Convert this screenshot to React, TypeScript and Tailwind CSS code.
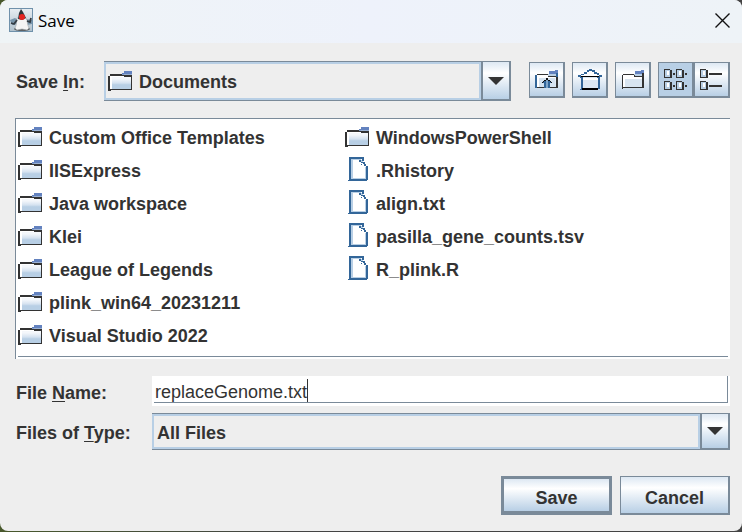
import type { ReactNode } from "react";

const folders = [
  "Custom Office Templates",
  "IISExpress",
  "Java workspace",
  "Klei",
  "League of Legends",
  "plink_win64_20231211",
  "Visual Studio 2022",
];

const entries = [
  ...folders.map((name) => ({ name, folder: true })),
  { name: "WindowsPowerShell", folder: true },
  { name: ".Rhistory", folder: false },
  { name: "align.txt", folder: false },
  { name: "pasilla_gene_counts.tsv", folder: false },
  { name: "R_plink.R", folder: false },
];

function FolderIcon() {
  return (
    <svg width="24" height="20" viewBox="0 0 24 20" shapeRendering="crispEdges" aria-hidden="true">
      <defs>
        <linearGradient id="folder" x1="0" y1="0" x2="0" y2="1">
          <stop offset="0.15" stopColor="#f4f7fb" />
          <stop offset="0.5" stopColor="#d5e2f0" />
          <stop offset="0.65" stopColor="#b8cfe5" />
        </linearGradient>
      </defs>
      <path d="M2 5h21v13H2z" fill="#fff" />
      <path d="M4 6h19v12H4z" fill="url(#folder)" />
      <path d="M16 0h8v3h-8zM14 2h2v1h-2z" fill="#6382bf" />
      <path d="M14 3h10v1H14z" fill="#7f9bcb" />
      <path d="M16 4h8v1h-8z" fill="#9ab1d4" />
      <path d="M2 3h12v2H2zM14 4h2v1h-2zM16 4h8v2h-8zM23 4h1v15h-1zM2 18h22v1H2zM0 5h2v14H0zM0 19h3v1H0z" fill="#333" />
      <path d="M16 3h8v1h-8z" fill="#9ab1d4" />
      <path d="M2 5h2v13H2z" fill="#fff" />
    </svg>
  );
}

function FileIcon() {
  return (
    <svg width="20" height="24" viewBox="0 0 20 24" shapeRendering="crispEdges" aria-hidden="true">
      <path d="M2 2h13l4 7v13H2z" fill="#fff" />
      <path d="M3 2h10v1H3zM3 2h2v20H3zM5 21h12v1H5zM17 10h1v12h-1zM13 3h2v3h-2z" fill="#b8cfe5" />
      <path d="M1 0h15v2H1zM1 0h2v23H1zM0 23h19v1H0zM1 22h18v1H1zM18 9h2v14h-2zM16 7h2v2h-2zM15 5h2v2h-2zM14 2h2v2h-2zM11 3h2v2h-2zM13 5h2v1h-2zM13 7h1v1h-1z" fill="#336699" />
    </svg>
  );
}

function DukeIcon() {
  return (
    <svg width="24" height="24" viewBox="0 0 24 24" aria-hidden="true">
      <defs>
        <linearGradient id="tile" x1="0" y1="0" x2="0" y2="1">
          <stop offset="0" stopColor="#e8eef2" />
          <stop offset="1" stopColor="#aebfcb" />
        </linearGradient>
      </defs>
      <rect x="0.5" y="0.5" width="23" height="23" fill="url(#tile)" stroke="#6f91ab" />
      <path d="M1 12l5-2 3 2v4l-6 1zM16 11l7 1v4l-5 1z" fill="#7895ab" />
      <ellipse cx="13" cy="21" rx="8" ry="2" fill="#5d6265" />
      <path d="M8 10c-1 4 0 7-2 10l2 2 5-1 5 1 2-2c-2-3-1-7-3-10z" fill="#f4f4f4" stroke="#a0a5a8" strokeWidth="0.6" />
      <path d="M12 1l2 3 3 6-4 2-4-1 1-6z" fill="#30363b" />
      <path d="M8 12l-3 4-3-1M18 13l3 1 1-4" fill="none" stroke="#343c43" strokeWidth="1.8" />
      <circle cx="13" cy="9" r="3" fill="#e52521" />
    </svg>
  );
}

function UpIcon() {
  return (
    <svg width="24" height="20" viewBox="0 0 24 20" shapeRendering="crispEdges" aria-hidden="true">
      <path d="M2 5h18v13H2z" fill="#fff" />
      <path d="M4 8h16v9H4z" fill="#d5e3f0" />
      <path d="M20 0h3v3h-3zM14 1h7v3h-7z" fill="#6382bf" />
      <path d="M13 4h8v2h-8z" fill="#b8cfe5" />
      <path d="M2 4h11v1H2zM13 6h9v1h-9zM21 7h2v11h-2zM2 17h20v1H2z" fill="#333" />
      <path d="M0 5h2v13H0zM21 3h2v4h-2zM7 12h10v1H7zM8 11h8v1H8zM9 13h2v5H9zM13 13h2v5h-2z" fill="#336699" />
      <path d="M11 8h2v2h-2zM9 10h2v1H9zM13 10h2v1h-2zM8 11h1v1H8zM15 11h1v1h-1zM7 12h1v1H7zM16 12h1v1h-1z" fill="#111" />
      <path d="M11 10h2v8h-2z" fill="#7fa5c9" />
    </svg>
  );
}

function HomeIcon() {
  return (
    <svg width="24" height="22" viewBox="0 0 24 22" shapeRendering="crispEdges" aria-hidden="true">
      <path d="M10 2h5l7 5H2z" fill="#fff" />
      <path d="M3 8h18v12H3z" fill="#dce8f3" />
      <path d="M5 9h15v2H5z" fill="#fff" />
      <path d="M11 0h3v2h-3zM9 1h2v2H9zM14 1h3v2h-3zM6 3h3v2H6zM16 3h3v2h-3zM3 5h3v1H3zM19 4h2v2h-2zM0 6h3v2H0zM21 6h3v2h-3zM2 8h3v1H2zM19 8h3v1h-3zM3 9h2v11H3zM20 9h2v11h-2zM2 20h2v1H2z" fill="#336699" />
      <path d="M3 7h18v1H3zM4 19h16v2H4z" fill="#000" />
    </svg>
  );
}

function NewFolderIcon() {
  return (
    <svg width="24" height="20" viewBox="0 0 24 20" shapeRendering="crispEdges" aria-hidden="true">
      <path d="M2 5h20v13H2z" fill="#fff" />
      <path d="M4 9h17v8H4z" fill="#d9e5f0" />
      <path d="M20 0h3v3h-3zM14 1h7v3h-7z" fill="#6382bf" />
      <path d="M13 4h8v2h-8z" fill="#b8cfe5" />
      <path d="M2 4h11v1H2zM13 5h1v2h-1zM14 6h8v1h-8zM21 3h2v15h-2zM1 5h1v14H1zM1 17h21v1H1z" fill="#333" />
    </svg>
  );
}

function ListGlyph({ x, y }: { x: number; y: number }) {
  return (
    <g transform={`translate(${x} ${y})`}>
      <path d="M0 0h6v1h2v8H0z" fill="#333" />
      <path d="M1 1h5v7H1z" fill="#b8cfe5" />
      <path d="M3 2h2v4H3z" fill="#fff" />
    </g>
  );
}

function ListViewIcon() {
  return (
    <svg width="24" height="22" viewBox="0 0 24 22" shapeRendering="crispEdges" aria-hidden="true">
      <ListGlyph x={0} y={0} />
      <ListGlyph x={12} y={0} />
      <ListGlyph x={0} y={12} />
      <ListGlyph x={12} y={12} />
      <path d="M9 4h2v2H9zM21 4h2v2h-2zM9 16h2v2H9zM21 16h2v2h-2z" fill="#333" />
    </svg>
  );
}

function DetailsViewIcon() {
  return (
    <svg width="24" height="22" viewBox="0 0 24 22" shapeRendering="crispEdges" aria-hidden="true">
      <ListGlyph x={0} y={0} />
      <ListGlyph x={0} y={12} />
      <path d="M9 4h13v2H9zM9 16h13v2H9z" fill="#333" />
    </svg>
  );
}

function ToolButton({ label, pressed, children }: { label: string; pressed?: boolean; children: ReactNode }) {
  return (
    <button
      type="button"
      aria-label={label}
      aria-pressed={pressed}
      className={`flex size-9 items-center justify-center border-2 border-t border-l border-[#7a8a99] ${
        pressed ? "bg-[#b8cfe5]" : "bg-linear-to-b from-[#dde8f3] via-white via-30% to-[#b8cfe5]"
      }`}
    >
      {children}
    </button>
  );
}

function ComboBox({ id, value, icon, height }: { id: string; value: string; icon?: ReactNode; height: string }) {
  return (
    <div className={`relative flex min-w-0 flex-1 border-y border-[#7a8a99] ${height}`}>
      {icon && <span className="pointer-events-none absolute inset-y-0 left-1 flex items-center">{icon}</span>}
      <select
        id={id}
        className={`min-w-0 flex-1 appearance-none border-2 border-[#b8cfe5] bg-[#eee] pt-0.5 font-bold outline-none ${
          icon ? "pl-[33px]" : "pl-[3px]"
        }`}
      >
        <option>{value}</option>
      </select>
      <span className="pointer-events-none flex w-[30px] items-center justify-center border-x-2 border-b border-[#7a8a99] bg-linear-to-b from-[#dde8f3] via-white via-30% to-[#b8cfe5]">
        <svg width="16" height="8" viewBox="0 0 16 8" aria-hidden="true">
          <path d="M0 0h16L8 8z" fill="#333" />
        </svg>
      </span>
    </div>
  );
}

function Mnemonic({ children }: { children: string }) {
  return <span className="underline decoration-1 underline-offset-2">{children}</span>;
}

export default function App() {
  return (
    <div className="flex min-h-screen flex-col bg-linear-to-r from-[#48582c] to-[#444] to-40% pb-px font-['Liberation_Sans',Arial,sans-serif] text-lg leading-6 text-[#333]">
      <div className="flex flex-1 flex-col overflow-hidden rounded-lg bg-[#eee]">
        <header className="flex h-[43px] items-center bg-linear-to-r from-[#eff4f6] via-[#eef2fb] to-[#eef3f7] pr-3 pb-[3px] pl-[9px]">
          <DukeIcon />
          <h1 className="ml-[5px] flex-1 pt-0.5 font-['Open_Sans','Noto_Sans',sans-serif] text-[17px] text-black">Save</h1>
          <button type="button" aria-label="Close">
            <svg width="15" height="15" viewBox="0 0 15 15" aria-hidden="true">
              <path d="M0.5 0.5l14 14M14.5 0.5l-14 14" stroke="#111" strokeWidth="1.4" />
            </svg>
          </button>
        </header>

        <main className="flex flex-1 flex-col pt-[18px] pr-3 pb-4 pl-[15px]">
          <div className="flex items-start">
            <label htmlFor="dir" className="flex h-10 w-[89px] items-center pt-0.5 pl-px font-bold">
              <span>
                Save <Mnemonic>I</Mnemonic>n:
              </span>
            </label>
            <ComboBox id="dir" value="Documents" icon={<FolderIcon />} height="h-10" />
            <div className="ml-[18px] flex gap-[7px] pt-px">
              <ToolButton label="Up One Level">
                <UpIcon />
              </ToolButton>
              <ToolButton label="Home">
                <HomeIcon />
              </ToolButton>
              <ToolButton label="Create New Folder">
                <NewFolderIcon />
              </ToolButton>
              <div className="flex">
                <ToolButton label="List" pressed>
                  <ListViewIcon />
                </ToolButton>
                <ToolButton label="Details">
                  <DetailsViewIcon />
                </ToolButton>
              </div>
            </div>
          </div>

          <div className="mt-[17px] border-t border-l border-[#7a8a99] bg-white px-0.5 pb-0.5">
            <ul className="grid grid-flow-col grid-cols-[327px_1fr] grid-rows-[repeat(7,33px)] border-b border-[#7a8a99] pt-0.5 pb-1 font-bold">
              {entries.map((entry) => (
                <li key={entry.name} className="flex items-center">
                  <span className={entry.folder ? "mr-[7px] pb-0.5" : "mr-2 ml-[3px] pb-[3px]"}>
                    {entry.folder ? <FolderIcon /> : <FileIcon />}
                  </span>
                  {entry.name}
                </li>
              ))}
            </ul>
          </div>

          <div className="mt-[17px] flex">
            <label htmlFor="name" className="flex w-[137px] items-center pt-[3px] pl-px font-bold">
              <span>
                File <Mnemonic>N</Mnemonic>ame:
              </span>
            </label>
            <div className="relative flex min-w-0 flex-1 bg-white pr-0.5 pb-[3px] pl-0.5">
              <input
                id="name"
                type="text"
                defaultValue="replaceGenome.txt"
                className="h-[27px] min-w-0 flex-1 border-r border-b border-[#7a8a99] bg-white pt-[7px] pl-px outline-none"
              />
              <span className="absolute top-[3px] left-[155px] h-[23px] w-px bg-[#333]" />
            </div>
          </div>

          <div className="mt-[7px] flex">
            <label htmlFor="type" className="flex w-[137px] items-center pt-0.5 pl-px font-bold">
              <span>
                Files of <Mnemonic>T</Mnemonic>ype:
              </span>
            </label>
            <ComboBox id="type" value="All Files" height="h-[37px]" />
          </div>

          <div className="mt-[26px] flex justify-end gap-2">
            <button
              type="button"
              className="h-[39px] w-[111px] border-3 border-b-4 border-[#7a8a99] bg-linear-to-b from-[#dde8f3] via-white via-30% to-[#b8cfe5] pt-1.5 font-bold"
            >
              Save
            </button>
            <button
              type="button"
              className="h-[39px] w-[110px] border-2 border-t border-l border-[#7a8a99] bg-linear-to-b from-[#dde8f3] via-white via-30% to-[#b8cfe5] pt-1.5 font-bold"
            >
              Cancel
            </button>
          </div>
        </main>
      </div>
    </div>
  );
}
